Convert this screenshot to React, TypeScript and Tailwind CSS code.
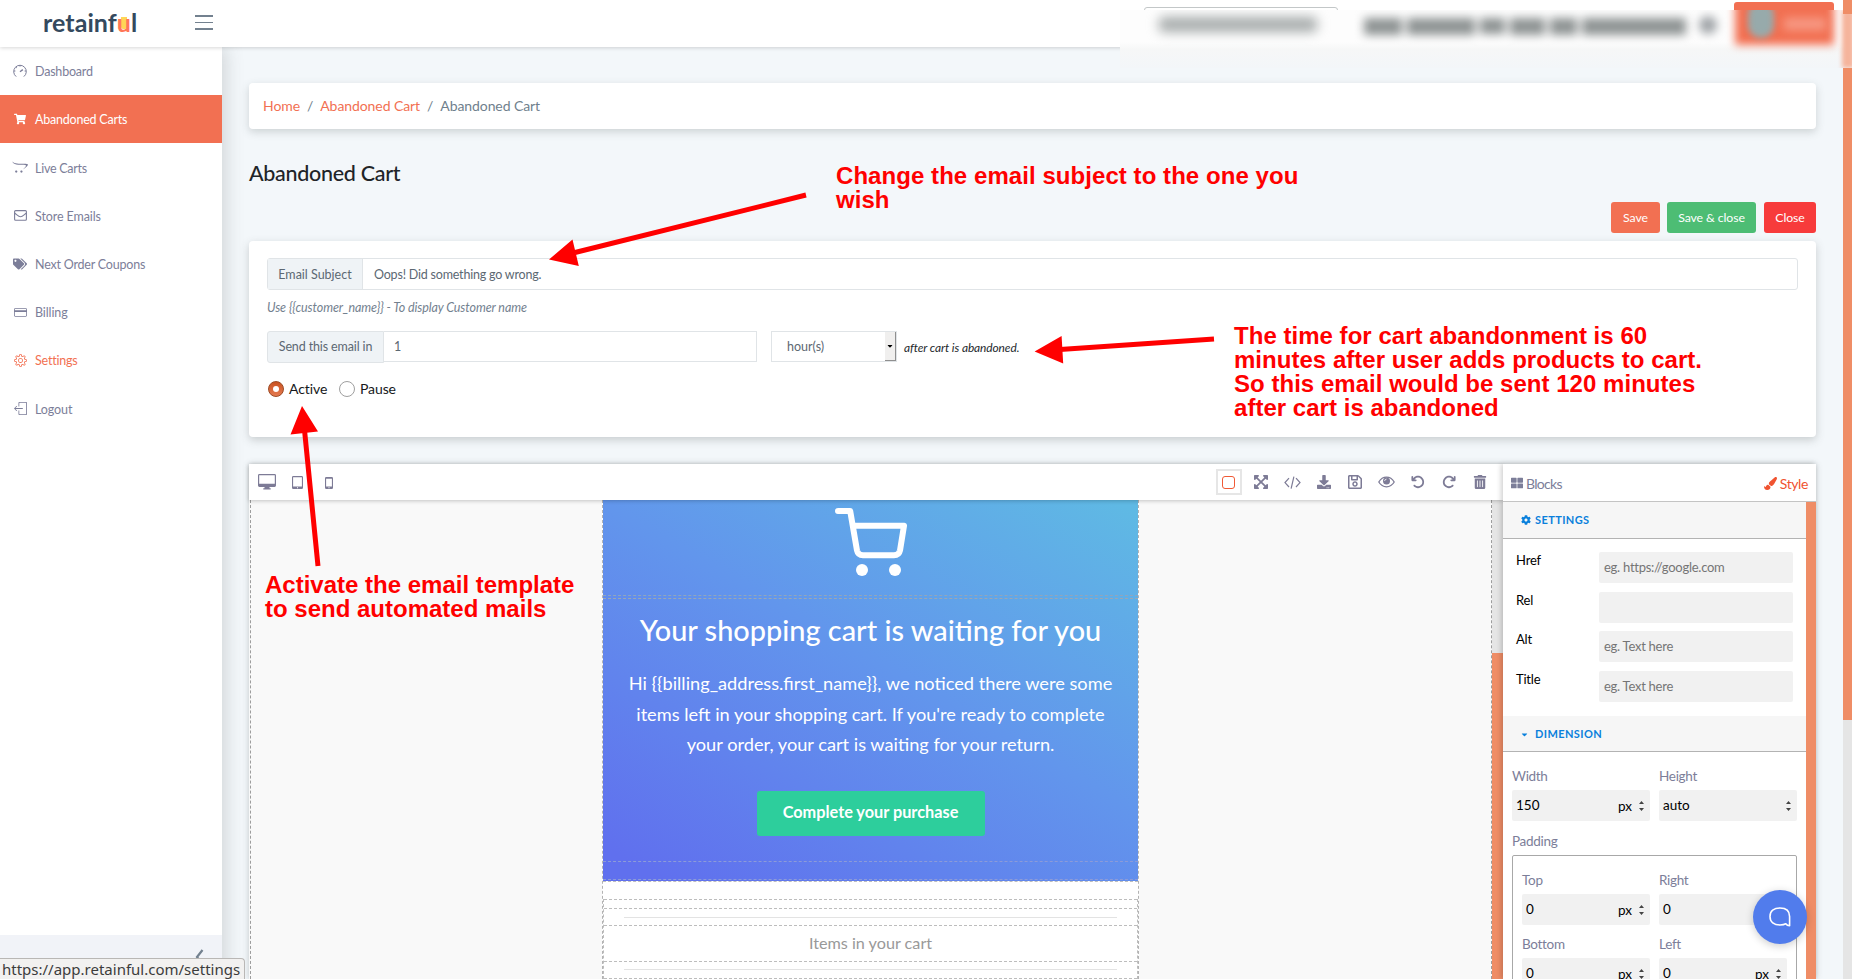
import React from "react";
import {
  FaShoppingCart,
  FaOpencart,
  FaTags,
  FaExpandArrowsAlt,
  FaDownload,
  FaRegSave,
  FaTrashAlt,
  FaThLarge,
  FaPaintBrush,
  FaCog,
  FaCaretDown,
} from "react-icons/fa";
import { FaArrowRotateLeft, FaArrowRotateRight } from "react-icons/fa6";
import { SlCreditCard, SlSettings, SlLogout } from "react-icons/sl";

const SpeedIcon = () => (
  <svg width="14" height="14" viewBox="0 0 14 14" fill="none" stroke="currentColor" strokeWidth="1">
    <path d="M3.2 12.6A6.3 6.3 0 1 1 10.8 12.6" />
    <path d="M7 7.8L9.8 5.6" strokeWidth="1.4" />
    <path d="M7 1v1.6M1 7h1.4M11.6 7H13M2.9 3l.9.9" />
  </svg>
);

const MailIcon = () => (
  <svg width="13" height="11" viewBox="0 0 13 11" fill="none" stroke="currentColor" strokeWidth="1.1">
    <rect x=".6" y=".6" width="11.8" height="9.6" rx="1" />
    <path d="M.8 3.2C3 4.8 4.6 6.8 6.5 6.8S10 4.8 12.2 3.2" />
  </svg>
);

const EyeIcon = () => (
  <svg width="17" height="12" viewBox="0 0 17 12" fill="none" stroke="currentColor" strokeWidth="1.3">
    <path d="M.8 6C2.6 3 5.4 1.2 8.5 1.2S14.4 3 16.2 6C14.4 9 11.6 10.8 8.5 10.8S2.6 9 .8 6Z" />
    <circle cx="8.5" cy="5" r="3.5" fill="currentColor" stroke="none" />
    <path d="M6.6 5A2 2 0 0 1 8.5 3.1" stroke="white" strokeWidth=".8" />
  </svg>
);

const CodeIcon = () => (
  <svg width="17" height="13" viewBox="0 0 17 13" fill="none" stroke="currentColor" strokeWidth="1.2">
    <path d="M5 2.2L1 6.6L5 11M12 2.2L16 6.6L12 11M9.9 .6L7.1 12.6" />
  </svg>
);

const DesktopIcon = () => (
  <svg width="18" height="16" viewBox="0 0 18 16" fill="currentColor">
    <path fillRule="evenodd" d="M1.4 0h15.2Q18 0 18 1.4v10.2Q18 13 16.6 13H11.5v1.3h1.2V15.4H5.3V14.3h1.2V13H1.4Q0 13 0 11.600V1.4Q0 0 1.4 0ZM1.2 1.2V9.800H16.800V1.200Z" />
  </svg>
);

const TabletIcon = () => (
  <svg width="11" height="13" viewBox="0 0 11 13" fill="currentColor">
    <path fillRule="evenodd" d="M1.300 0h8.400Q11 0 11 1.300v10.400Q11 13 9.700 13H1.300Q0 13 0 11.700V1.300Q0 0 1.300 0ZM1.100 1.200V10.500H9.900V1.200ZM5 11.300V12.200H6V11.300Z" />
  </svg>
);

const PhoneIcon = () => (
  <svg width="8" height="12" viewBox="0 0 8 12" fill="currentColor">
    <path fillRule="evenodd" d="M1.200 0h5.600Q8 0 8 1.200v9.600Q8 12 6.800 12H1.200Q0 12 0 10.800V1.200Q0 0 1.200 0ZM1.100 1.700V9.500H6.900V1.700ZM3.500 10.200V11.200H4.500V10.200Z" />
  </svg>
);

const CartDrawing = () => (
  <svg width="72" height="69" viewBox="0 0 72 69" fill="none" stroke="white" strokeWidth="6" strokeLinecap="round" strokeLinejoin="round">
    <path d="M3 3H15.200L22 42.500Q23 47.300 28 47.300H59Q64 47.300 65 42.500L69 17.800H19.500" />
    <circle cx="27" cy="62" r="6" fill="white" stroke="none" />
    <circle cx="60" cy="62" r="6" fill="white" stroke="none" />
  </svg>
);

const NAV = [
  { label: "Dashboard", icon: <SpeedIcon />, cls: "text-[#7c7e99] tracking-[-0.2px]" },
  { label: "Abandoned Carts", icon: <FaShoppingCart size={12} />, cls: "bg-[#f27052] text-white tracking-[-0.22px]" },
  { label: "Live Carts", icon: <FaOpencart size={16} />, cls: "text-[#7c7e99] tracking-[-0.25px]" },
  { label: "Store Emails", icon: <MailIcon />, cls: "text-[#7c7e99] tracking-[-0.1px]" },
  { label: "Next Order Coupons", icon: <FaTags size={14} />, cls: "text-[#7c7e99] tracking-[-0.2px]" },
  { label: "Billing", icon: <SlCreditCard size={13} />, cls: "text-[#7c7e99] tracking-[-0.1px]" },
  { label: "Settings", icon: <SlSettings size={13} />, cls: "text-[#f27052] tracking-[-0.2px]" },
  { label: "Logout", icon: <SlLogout size={13} />, cls: "text-[#7c7e99] tracking-[-0.1px]" },
];

function Sidebar() {
  return (
    <aside className="z-10 flex w-[222px] shrink-0 flex-col bg-white shadow-[3px_0_18px_rgba(60,70,70,0.2)]">
      <nav className="flex flex-col text-[12.5px]">
        {NAV.map((n) => (
          <a key={n.label} className={`flex h-[48.200px] items-center ${n.cls}`}>
            <span className="flex w-[35px] justify-center pl-[5px]">{n.icon}</span>
            <span className="pt-[3px]">{n.label}</span>
          </a>
        ))}
      </nav>
      <div className="mt-auto flex h-11 items-start justify-end bg-[#f1f3f8] pt-3 pr-[18px] text-[#73818f]">
        <svg width="9" height="18" viewBox="0 0 9 18" fill="none" stroke="currentColor" strokeWidth="2.2">
          <path d="M7.500 3L2 10L7.500 17" />
        </svg>
      </div>
    </aside>
  );
}

function Header() {
  return (
    <header className="relative z-20 flex h-[47px] shrink-0 items-center bg-white shadow-[0_1px_4px_rgba(0,0,0,0.16)]">
      <div className="flex w-[195px] pb-[3px] pl-[43px] text-[25px] leading-none font-bold tracking-[0.050px] text-[#34495e]">
        retainf
        <span className="relative text-[#ff7657]">
          <i className="absolute top-[7px] left-[4px] h-[12px] w-[6px] rounded-b-[2px] bg-[#ffd657]" />
          <span className="relative">u</span>
        </span>
        l
      </div>
      <div className="flex w-[18px] flex-col gap-[5px] pb-[2px]">
        <i className="h-[1.500px] bg-[#73818f]" />
        <i className="h-[1.500px] bg-[#73818f]" />
        <i className="h-[1.500px] bg-[#73818f]" />
      </div>
      <div className="absolute top-[7px] left-[1144px] h-5 w-[194px] rounded-[3px] border border-[#c3c7c8]" />
      <div className="absolute top-[2px] left-[1734px] h-4 w-[100px] rounded-t-[3px] bg-[#f27052]" />
      <div className="absolute top-[10px] left-[1120px] h-[58px] w-[732px] overflow-hidden bg-linear-to-b from-[#fdfdfd] from-55% via-[#f6f7f7] via-68% to-[#f3f6f9]">
        <div className="absolute top-[7px] left-[39px] h-[15px] w-[158px] rounded bg-[#a6abab] blur-[6px]" />
        <div className="absolute top-[8px] left-[244px] flex gap-[5px] blur-[5px]">
          <i className="h-[17px] w-[38px] bg-[#8f9494]" />
          <i className="h-[17px] w-[68px] bg-[#8f9494]" />
          <i className="h-[16px] w-[25px] bg-[#8f9494]" />
          <i className="h-[17px] w-[35px] bg-[#8f9494]" />
          <i className="h-[17px] w-[27px] bg-[#8f9494]" />
          <i className="h-[17px] w-[104px] bg-[#8f9494]" />
        </div>
        <div className="absolute top-[6px] left-[579px] size-[18px] rounded-full bg-[#9ea2a6] blur-[5px]" />
        <div className="absolute -top-3 left-[615px] h-[47px] w-[99px] bg-[#f27052] blur-[4px]" />
        <div className="absolute -top-2 left-[628px] h-[36px] w-[26px] rounded-full bg-[#97aaab] blur-[3px]" />
        <div className="absolute top-[8px] left-[664px] h-[12px] w-[42px] bg-[#f79a85] blur-[5px]" />
        <div className="absolute top-0 left-[722px] h-[58px] w-[12px] bg-[#f5b49c] blur-[2px]" />
      </div>
      <div className="absolute top-0 right-0 h-[14px] w-[9px] bg-[#ef8d66]" />
    </header>
  );
}

function EmailForm() {
  return (
    <section className="mt-2 flex h-[196px] flex-col rounded-[4px] bg-white pt-[17px] pr-[18px] pl-[18px] text-[12.500px] text-[#5c6873] shadow-[0_3px_9px_rgba(70,80,80,0.25)]">
      <div className="flex h-8 rounded-[3px] border border-[#e0e4e7]">
        <span className="flex w-[95px] items-center justify-center border-r border-[#e0e4e7] bg-[#eff3f6] pt-[3px]">Email Subject</span>
        <span className="flex items-center pt-[3px] pl-[11px] tracking-[-0.2px]">Oops! Did something go wrong.</span>
      </div>
      <p className="mt-[8px] h-[19px] text-[12.500px] leading-[19px] tracking-[-0.080px] text-[#73818f] italic">
        Use {"{{customer_name}}"} - To display Customer name
      </p>
      <div className="mt-[14px] flex h-8 items-start">
        <span className="flex h-8 w-[117px] items-center justify-center rounded-l-[3px] border border-[#e0e4e7] bg-[#eff3f6] tracking-[-0.130px]">Send this email in</span>
        <span className="flex h-[31px] w-[373px] items-center border border-l-0 border-[#e0e4e7] pt-[2px] pl-[10px]">1</span>
        <span className="ml-[14px] flex h-[31px] w-[126px] items-center justify-between border border-[#e0e4e7] pl-[15px]">
          <span className="pt-px">hour(s)</span>
          <span className="flex h-full w-[11px] items-center justify-center border-r border-b border-[#8f8f8f] bg-[#f0efee] text-black">
            <FaCaretDown size={8} />
          </span>
        </span>
        <i className="mt-[8px] ml-[7px] text-[11.900px] tracking-[-0.080px] text-[#23282c]">after cart is abandoned.</i>
      </div>
      <div className="mt-[17px] ml-px flex h-[18px] items-center text-[14px] tracking-[-0.100px] text-[#16181b]">
        <span className="flex size-4 items-center justify-center rounded-full border border-[#9c4a24] bg-linear-to-b from-[#c9521f] to-[#e57a50]">
          <i className="size-[6px] rounded-full bg-white" />
        </span>
        <span className="ml-[5px] w-[50px] pb-px">Active</span>
        <span className="size-4 rounded-full border border-[#9f9f9f] bg-white" />
        <span className="ml-[5px] pb-px">Pause</span>
      </div>
    </section>
  );
}

const Dash = ({ cls }: { cls: string }) => <i className={`block shrink-0 border-t border-dashed ${cls}`} />;

function EmailCanvas() {
  return (
    <div className="ml-[351px] flex h-[479px] w-[537px] flex-col overflow-hidden border-x border-dashed border-[#b3b3b3] bg-white text-center">
      <div className="flex h-[381px] shrink-0 flex-col items-center bg-[linear-gradient(30deg,#6070ee_5%,#6296ec_55%,#5fb9e4_98%)] text-white">
        <div className="flex h-[95px] w-full shrink-0 justify-center pt-[8px]">
          <CartDrawing />
        </div>
        <Dash cls="w-full border-[#8fa6bd]" />
        <Dash cls="mt-[2px] w-full border-[#9aa7b5]" />
        <h2 className="mt-[12px] h-[38px] text-[28.900px] leading-[38px] font-medium whitespace-nowrap">Your shopping cart is waiting for you</h2>
        <p className="mt-[19px] text-[18.220px] leading-[30.500px] whitespace-nowrap">
          Hi {"{{billing_address.first_name}}"}, we noticed there were some
          <br />
          items left in your shopping cart. If you&apos;re ready to complete
          <br />
          your order, your cart is waiting for your return.
        </p>
        <span className="mt-[31px] flex h-[45px] w-[228px] shrink-0 items-center justify-center rounded-[3px] bg-[#2dce9c] pb-px text-[16.300px] font-bold">
          Complete your purchase
        </span>
        <Dash cls="mt-[25px] w-full border-[#8c9bd8]" />
        <Dash cls="mt-[17px] w-full border-[#8c9bd8]" />
      </div>
      <Dash cls="border-[#bdbdbd]" />
      <div className="mt-[17px] flex flex-col border-x border-dashed border-[#bdbdbd]">
        <Dash cls="border-[#bdbdbd]" />
        <Dash cls="mt-[8px] border-[#bdbdbd]" />
        <i className="mx-[20px] mt-[8px] h-px bg-[#e3e3e3]" />
        <Dash cls="mt-[7px] border-[#bdbdbd]" />
        <span className="h-[35px] text-[16.200px] leading-[33px] text-[#999]">Items in your cart</span>
        <Dash cls="border-[#bdbdbd]" />
        <i className="mx-[20px] mt-[7px] h-px bg-[#e3e3e3]" />
        <Dash cls="mt-[8px] border-[#bdbdbd]" />
      </div>
    </div>
  );
}

const Spin = () => (
  <svg width="5" height="10" viewBox="0 0 5 10" fill="#444">
    <path d="M0 3L2.500 0L5 3ZM0 7L2.500 10L5 7Z" />
  </svg>
);

function NumberField({ label, value, unit }: { label: string; value: string; unit?: string }) {
  return (
    <div className="flex flex-1 flex-col">
      <span className="h-[21px] text-[13.500px] leading-[15px] tracking-[-0.300px] text-[#7c7e99]">{label}</span>
      <span className="flex h-[31px] items-center rounded-[2px] bg-[#f1f1f1] pr-[6px] pl-1 text-[13.500px] text-black">
        <span className="flex-1">{value}</span>
        {unit && <span className="mr-[7px] pt-[2px]">{unit}</span>}
        <Spin />
      </span>
    </div>
  );
}

function StylePanel() {
  const fields = [
    ["Href", "eg. https://google.com"],
    ["Rel", ""],
    ["Alt", "eg. Text here"],
    ["Title", "eg. Text here"],
  ];
  return (
    <div className="z-10 flex w-[313px] shrink-0 flex-col bg-white shadow-[-2px_0_5px_rgba(0,0,0,0.18)]">
      <div className="flex h-[38px] shrink-0 items-center justify-between border-b border-[#c4c4c4] pr-[8px] pl-[8px] text-[14px] tracking-[-0.700px]">
        <span className="flex items-center gap-[3px] pt-px text-[#7c7e99]">
          <FaThLarge size={12} />
          Blocks
        </span>
        <span className="flex items-center gap-[3px] pt-px tracking-[-0.400px] text-[#f05330]">
          <FaPaintBrush size={13} />
          Style
        </span>
      </div>
      <div className="flex h-[477px]">
        <div className="flex flex-1 flex-col overflow-hidden">
          <div className="flex h-[37px] shrink-0 items-center gap-[4px] border-b border-[#b3b3b3] bg-[#f6f6f6] pl-[18px] text-[11px] font-bold tracking-[0.400px] text-[#0a80dc]">
            <FaCog size={10} />
            SETTINGS
          </div>
          <div className="flex h-[177px] shrink-0 flex-col gap-[8.700px] pt-[13px] pr-[13px] pl-[13px] text-[13px] tracking-[-0.260px]">
            {fields.map(([l, p]) => (
              <div key={l} className="flex h-[31px] shrink-0">
                <span className="w-[83px] text-[13px] leading-[16px] tracking-[-0.200px] text-black">{l}</span>
                <span className="flex flex-1 items-center rounded-[2px] bg-[#f1f1f1] pl-[5px] text-[#757575]">{p}</span>
              </div>
            ))}
          </div>
          <div className="flex h-[36px] shrink-0 items-center gap-[6px] border-b border-[#b3b3b3] bg-[#f6f6f6] pt-px pl-[17px] text-[11px] font-bold tracking-[0.400px] text-[#0a80dc]">
            <FaCaretDown size={9} />
            DIMENSION
          </div>
          <div className="flex shrink-0 gap-[9px] pt-[17px] pr-[9px] pl-[9px]">
            <NumberField label="Width" value="150" unit="px" />
            <NumberField label="Height" value="auto" />
          </div>
          <span className="mt-[12px] h-[22px] shrink-0 pl-[9px] text-[13.500px] leading-[17px] tracking-[-0.300px] text-[#7c7e99]">Padding</span>
          <div className="mx-[9px] flex h-[200px] shrink-0 flex-col gap-[12px] rounded-[2px] border border-[#a8a8a8] pt-[17px] pr-[9px] pl-[9px]">
            <div className="flex gap-[9px]">
              <NumberField label="Top" value="0" unit="px" />
              <NumberField label="Right" value="0" unit="px" />
            </div>
            <div className="flex gap-[9px]">
              <NumberField label="Bottom" value="0" unit="px" />
              <NumberField label="Left" value="0" unit="px" />
            </div>
          </div>
        </div>
        <div className="w-[10px] bg-[#ef8d66]" />
      </div>
    </div>
  );
}

function Toolbar() {
  const tools = [
    <FaExpandArrowsAlt size={16} />,
    <CodeIcon />,
    <FaDownload size={14} />,
    <FaRegSave size={16} />,
    <EyeIcon />,
    <FaArrowRotateLeft size={14} />,
    <FaArrowRotateRight size={14} />,
    <FaTrashAlt size={14} />,
  ];
  return (
    <div className="z-10 flex h-9 shrink-0 items-center bg-white text-[#7d7b96] shadow-[0_1px_4px_rgba(0,0,0,0.22)]">
      <span className="flex w-[35px] justify-center"><DesktopIcon /></span>
      <span className="flex w-[27px] justify-center pt-[1px]"><TabletIcon /></span>
      <span className="flex w-[36px] justify-center pt-[1px]"><PhoneIcon /></span>
      <span className="mr-[4px] ml-auto flex size-[26px] items-center justify-center border-2 border-[#e6e6e6]">
        <i className="size-[13px] rounded-[3px] border-[1.500px] border-[#f05a36]" />
      </span>
      {tools.map((t, i) => (
        <span key={i} className="flex w-[31.300px] justify-center">{t}</span>
      ))}
      <span className="w-[7px]" />
    </div>
  );
}

function Note({ cls, children }: { cls: string; children: React.ReactNode }) {
  return (
    <div className={`absolute z-40 font-['Liberation_Sans',sans-serif] text-[24px] leading-[24px] font-bold whitespace-nowrap text-[#f00] ${cls}`}>
      {children}
    </div>
  );
}

export default function App() {
  return (
    <div className="relative flex h-[979px] w-[1852px] flex-col overflow-hidden bg-[#f3f7fa] font-['Lato',sans-serif]">
      <Header />
      <div className="flex h-[932px]">
        <Sidebar />
        <main className="flex flex-1 flex-col pt-9 pr-[27px] pl-[27px]">
          <div className="flex h-[46px] shrink-0 items-center gap-[7px] rounded-[4px] bg-white pb-px pl-[14px] text-[14px] tracking-[-0.080px] text-[#6f7f8d] shadow-[0_3px_8px_rgba(70,80,80,0.22)]">
            <a className="text-[#f27052]">Home</a>
            <span>/</span>
            <a className="text-[#f27052]">Abandoned Cart</a>
            <span>/</span>
            <span>Abandoned Cart</span>
          </div>
          <h1 className="mt-[31px] h-[26px] text-[21.500px] leading-[26px] font-medium tracking-[-0.300px] text-[#1f2428]">Abandoned Cart</h1>
          <div className="mt-[16px] flex h-[31px] shrink-0 justify-end text-[12.300px] tracking-[-0.100px] text-white">
            <span className="flex w-[49px] items-center justify-center rounded-[3px] bg-[#f27052] pt-px">Save</span>
            <span className="ml-[7px] flex w-[89px] items-center justify-center rounded-[3px] bg-[#4dbd74] pt-px">Save &amp; close</span>
            <span className="ml-[8px] flex w-[52px] items-center justify-center rounded-[3px] bg-[#f73b3b] pt-px">Close</span>
          </div>
          <EmailForm />
          <section className="mt-[27px] flex h-[515px] shadow-[0_0_6px_rgba(70,80,80,0.3)]">
            <div className="flex flex-1 flex-col">
              <Toolbar />
              <div className="flex h-[479px] bg-[#f9f9f9]">
                <div className="ml-px flex w-[1242px] border-x border-dashed border-[#9d9d9d]">
                  <EmailCanvas />
                </div>
                <div className="flex flex-1 flex-col">
                  <div className="h-[153px] bg-[#e5e5e5]" />
                  <div className="flex-1 bg-[#ef8d66]" />
                </div>
              </div>
            </div>
            <StylePanel />
          </section>
        </main>
        <div className="flex w-[9px] flex-col bg-[#e5e5e5]">
          <div className="h-[673px] bg-[#ef8d66]" />
        </div>
      </div>

      <div className="absolute top-[890px] left-[1753px] z-30 flex size-[54px] items-center justify-center rounded-full bg-[#517cec] shadow-[0_2px_8px_rgba(0,0,0,0.2)]">
        <svg width="22" height="20" viewBox="0 0 22 20" fill="none" stroke="white" strokeWidth="1.600" strokeLinejoin="round">
          <path d="M20.600 18.800V9.500C20.600 4 17 1 11 1S1 4 1 9.500S5 18 11 18C13.500 18 15.500 17.600 16.800 16.800C17.600 18 19 18.800 20.600 18.800Z" />
        </svg>
      </div>

      <Note cls="top-[164px] left-[836px] tracking-[0.060px]">
        Change the email subject to the one you
        <br />
        wish
      </Note>
      <Note cls="top-[324px] left-[1234px] tracking-[0.030px]">
        The time for cart abandonment is 60
        <br />
        minutes after user adds products to cart.
        <br />
        So this email would be sent 120 minutes
        <br />
        after cart is abandoned
      </Note>
      <Note cls="top-[573px] left-[265px]">
        Activate the email template
        <br />
        to send automated mails
      </Note>
      <svg className="pointer-events-none absolute inset-0 z-40" width="1852" height="979" fill="#f00" stroke="#f00">
        <path d="M806 195L575 252.500M1214 339L1060 349.500M318 566L304.500 430" strokeWidth="5" />
        <path stroke="none" d="M549 259.500L572.500 239.500L578.800 266ZM1034.600 351.500L1061.600 336L1063.200 363.500ZM302 406L290.500 434.500L318 431.500Z" />
      </svg>

      <div className="absolute bottom-0 left-0 z-30 flex h-[21px] w-[245px] items-center rounded-tr-[4px] border-t border-r border-[#b9b7b5] bg-[#f2f1f0] pl-[2px] font-['Noto_Sans',sans-serif] text-[15px] leading-none whitespace-nowrap text-[#3c3c3c]">
        https://app.retainful.com/settings
      </div>
    </div>
  );
}
